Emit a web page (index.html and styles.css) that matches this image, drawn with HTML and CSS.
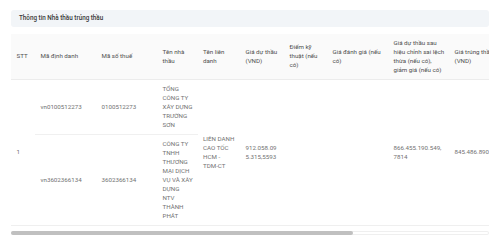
FILE: index.html
```html
<!DOCTYPE html>
<html lang="vi">
<head>
<meta charset="utf-8">
<title>Thông tin Nhà thầu trúng thầu</title>
<link rel="stylesheet" href="styles.css">
</head>
<body>
<section class="panel">
  <div class="panel-title">Thông tin Nhà thầu trúng thầu</div>
  <div class="table-scroll">
    <table class="grid">
      <colgroup>
        <col class="c-stt">
        <col class="c-wide">
        <col class="c-wide">
        <col class="c-name">
        <col class="c-joint">
        <col class="c-mid">
        <col class="c-score">
        <col class="c-wide">
        <col class="c-wide">
        <col class="c-wide">
        <col class="c-rest">
      </colgroup>
      <thead>
        <tr>
          <th>STT</th>
          <th>Mã định danh</th>
          <th>Mã số thuế</th>
          <th>Tên nhà thầu</th>
          <th>Tên liên danh</th>
          <th>Giá dự thầu (VND)</th>
          <th>Điểm kỹ thuật (nếu có)</th>
          <th>Giá đánh giá (nếu có)</th>
          <th>Giá dự thầu sau hiệu chỉnh sai lệch thừa (nếu có), giảm giá (nếu có)</th>
          <th>Giá trúng thầu (VND)</th>
          <th>Thời gian thực hiện hợp đồng</th>
        </tr>
      </thead>
      <tbody>
        <tr class="first">
          <td rowspan="2" class="span">1</td>
          <td>vn0100512273</td>
          <td>0100512273</td>
          <td>TỔNG CÔNG TY XÂY DỰNG TRƯỜNG SƠN</td>
          <td rowspan="2" class="span">LIÊN DANH CAO TỐC HCM - TDM-CT</td>
          <td rowspan="2" class="span num">912.058.095.315,5593</td>
          <td rowspan="2" class="span"></td>
          <td rowspan="2" class="span"></td>
          <td rowspan="2" class="span num">866.455.190.549,7814</td>
          <td rowspan="2" class="span nowrap">845.486.890.000</td>
          <td rowspan="2" class="span"></td>
        </tr>
        <tr class="second">
          <td>vn3602366134</td>
          <td>3602366134</td>
          <td>CÔNG TY TNHH THƯƠNG MẠI DỊCH VỤ VÀ XÂY DỰNG NTV THÀNH PHÁT</td>
        </tr>
      </tbody>
    </table>
  </div>
  <div class="scrollbar"><div class="scrollbar-thumb"></div></div>
</section>
</body>
</html>
```
FILE: styles.css
```css
html, body {
  margin: 0;
  padding: 0;
  background: #ffffff;
}

body {
  font-family: Roboto, "Liberation Sans", sans-serif;
  font-size: 6.2px;
  line-height: 9px;
  color: #727272;
}

.panel {
  padding: 10px 11px;
}

.panel-title {
  height: 17px;
  display: flex;
  align-items: center;
  padding-left: 8px;
  background: #f2f5f8;
  border-radius: 3px;
  font-size: 6.3px;
  font-weight: 500;
  color: #3a3a3a;
  margin-bottom: 7px;
}

.table-scroll {
  overflow: hidden;
}

.grid {
  width: 668px;
  table-layout: fixed;
  border-collapse: collapse;
}

.c-stt { width: 24px; }
.c-wide { width: 61px; }
.c-name { width: 40.5px; }
.c-joint { width: 42.5px; }
.c-mid { width: 44px; }
.c-score { width: 43px; }
.c-rest { width: auto; }

.grid th {
  background: #fafafa;
  text-align: left;
  font-weight: 400;
  color: #4f4f4f;
  padding: 4.5px 4.5px 4.5px 5.5px;
  border-bottom: 1px solid #ececec;
  vertical-align: middle;
}

.grid td {
  padding: 4.5px 4.5px 4.5px 5.5px;
  vertical-align: middle;
  text-align: left;
}

.grid .first td:not(.span) {
  border-bottom: 1px solid #f0f0f0;
}

.grid .second td,
.grid td.span {
  border-bottom: 1px solid #efefef;
}

.num {
  word-break: break-all;
}

.nowrap {
  white-space: nowrap;
  overflow: hidden;
}

.scrollbar {
  margin-top: 5px;
  height: 4px;
  border-radius: 2px;
  box-shadow: inset 0 0 0 1px #efefef;
  display: flex;
}

.scrollbar-thumb {
  width: 71.5%;
  background: #c0c0c0;
  border-radius: 2px;
}
```
